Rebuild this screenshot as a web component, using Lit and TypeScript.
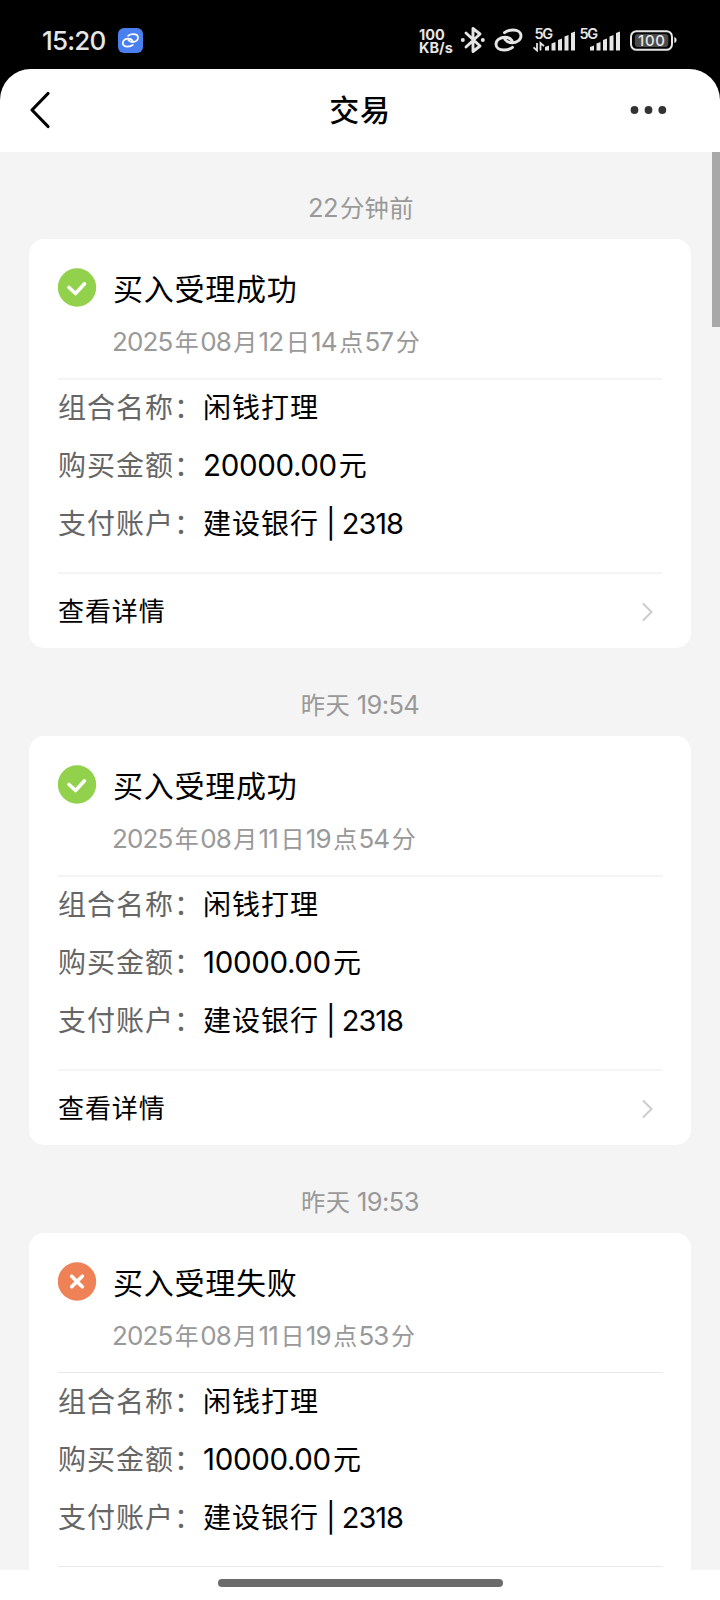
import { LitElement, html, svg, css, nothing } from "lit";
import { customElement, property } from "lit/decorators.js";

interface Trade {
  when: string;
  ok: boolean;
  title: string;
  time: string;
  amount: string;
}

const trades: Trade[] = [
  { when: "22分钟前", ok: true, title: "买入受理成功", time: "2025年08月12日14点57分", amount: "20000.00元" },
  { when: "昨天 19:54", ok: true, title: "买入受理成功", time: "2025年08月11日19点54分", amount: "10000.00元" },
  { when: "昨天 19:53", ok: false, title: "买入受理失败", time: "2025年08月11日19点53分", amount: "10000.00元" },
];

/* Latin runs get their own span so that they can use the numeral face. */
const mixed = (text: string) =>
  text
    .split(/([0-9:.| ]+)/)
    .filter(Boolean)
    .map((part) =>
      /^[0-9:.| ]+$/.test(part)
        ? html`<span class=${part.includes("|") ? "num acct" : "num"}>${part}</span>`
        : part
    );

const linkPaths = svg`
  <path d="M10 4.200C12.500 2.200 15.500 1.500 18.500 1.500C23.500 1.500 26.500 4 26.500 7.300C26.500 11.500 22 14.300 17.500 14.300C14.500 14.300 12 13 10.500 11"/>
  <path d="M18 18.800C15.500 20.800 12.500 21.500 9.500 21.500C4.500 21.500 1.500 19 1.500 15.700C1.500 11.500 6 8.700 10.500 8.700C13.500 8.700 16 10 17.500 12"/>`;

@customElement("status-bar")
export class StatusBar extends LitElement {
  static styles = css`
    :host {
      display: flex;
      align-items: center;
      height: 80px;
      box-sizing: border-box;
      padding: 0 42px 0 42px;
      background: #000;
      color: #e6e6e6;
      font-family: Inter, "Noto Sans", sans-serif;
    }
    .clock { font-size: 26px; font-weight: 500; letter-spacing: -0.800px; width: 76px; line-height: 30px; padding-top: 1px; white-space: nowrap; }
    .app { width: 25px; height: 25px; }
    .spacer { flex: 1; }
    .speed { font-size: 14.500px; line-height: 13px; font-weight: 700; width: 41px; padding-top: 1px; white-space: nowrap; }
    .rate { letter-spacing: 0; }
    .right { display: block; width: 218px; height: 30px; }
    .g { font: 600 14.500px Inter, sans-serif; fill: #e6e6e6; }
    .pct { font: 500 15px Inter, sans-serif; fill: #e6e6e6; }
  `;
  render() {
    const bars = (x: number) =>
      [5, 8.5, 12, 15.5, 19].map(
        (h, i) => svg`<path d="M${x + i * 6.5} 25.500v${-h + 1.500}l4-1.500v${h}z" fill="#e6e6e6"/>`
      );
    return html`
      <div class="clock">15:20</div>
      <svg class="app" viewBox="0 0 25 25">
        <rect width="25" height="25" rx="6" fill="#4a7ff0" />
        <g transform="translate(3.900 5.200) scale(.61 .62)" fill="none" stroke="#fff" stroke-width="2.800" stroke-linecap="round">${linkPaths}</g>
      </svg>
      <div class="spacer"></div>
      <div class="speed"><div>100</div><div class="rate">KB/s</div></div>
      <svg class="right" viewBox="0 0 218 30">
        <g fill="none" stroke="#e6e6e6" stroke-width="2.900" stroke-linejoin="round" stroke-linecap="round">
          <path d="M6 8l14 13-7 5.500V3.500l7 5.500L6 22" />
          <g transform="translate(34.500 3.500)">${linkPaths}</g>
        </g>
        <circle cx="2.800" cy="15" r="2" fill="#e6e6e6" />
        <circle cx="22.800" cy="15" r="2" fill="#e6e6e6" />
        <text class="g" x="74.500" y="13.500" textLength="18.500">5G</text>
        <path d="M77 18v7.500l-3.500-3.200M80.500 25.500V18l3.500 3.200" fill="none" stroke="#e6e6e6" stroke-width="1.800" />
        ${bars(85)}
        <text class="g" x="119.500" y="13.500" textLength="18.500">5G</text>
        ${bars(130)}
        <rect x="171" y="6.200" width="41" height="18.600" rx="5.500" fill="none" stroke="#e6e6e6" stroke-width="2" />
        <rect x="174.800" y="9" width="33.500" height="13" rx="3" fill="#4b4b4b" />
        <path d="M214.300 12c3 .5 3 5.500 0 6z" fill="#e6e6e6" />
        <text class="pct" x="178" y="20.700" textLength="27">100</text>
      </svg>
    `;
  }
}

@customElement("trade-card")
export class TradeCard extends LitElement {
  @property({ attribute: false }) trade!: Trade;
  @property({ type: Boolean }) partial = false;

  static styles = css`
    :host { display: block; }
    .when {
      height: 88px;
      box-sizing: border-box;
      padding: 38px 0 0 2px;
      line-height: 36px;
      text-align: center;
      font-size: 24.300px;
      letter-spacing: 0.400px;
      color: #999;
    }
    .card {
      box-sizing: border-box;
      height: 409px;
      margin: 0 29px;
      padding: 29px 28px 0 29px;
      background: #fff;
      border-radius: 15px;
    }
    .head { display: grid; grid-template-columns: 39px 1fr; grid-template-rows: 42px 36px; row-gap: 13px; column-gap: 16px; height: 110px; }
    .icon { width: 39px; height: 39px; }
    .title { font-size: 30px; letter-spacing: 0.750px; line-height: 38px; color: #000; }
    .time { grid-column: 2; font-size: 24px; line-height: 36px; letter-spacing: 0.100px; color: #999; white-space: nowrap; }
    .line { height: 2px; background: #f5f5f5; }
    .hair { height: 1px; margin-bottom: 1px; background: #e9e9e9; }
    .rows { height: 192px; }
    .row { display: flex; height: 58px; line-height: 53px; font-size: 28px; letter-spacing: 1px; white-space: pre; }
    .label { width: 145px; color: #666; }
    .value { color: #000; }
    .more { display: flex; justify-content: space-between; align-items: center; height: 73px; font-size: 26px; letter-spacing: 0.900px; line-height: 36px; color: #000; }
    .more span { margin-top: -2px; }
    .arrow { width: 12px; height: 20px; margin: 2px 10px 0 0; }
    .num { font-family: Inter, sans-serif; }
    .when .num { font-size: 25.500px; letter-spacing: -0.600px; margin-right: 2px; }
    .time .num { font-size: 26px; letter-spacing: -0.900px; margin: 0 2.500px 0 1.200px; }
    .time .num:first-child { margin-left: -1px; }
    .value .num { font-size: 29.500px; letter-spacing: -0.350px; margin-right: 2px; }
    .value .acct { font-size: 29px; letter-spacing: -1.050px; }
  `;
  render() {
    const t = this.trade;
    const line = this.partial ? "line hair" : "line";
    const rows = [
      ["组合名称：", "闲钱打理"],
      ["购买金额：", t.amount],
      ["支付账户：", "建设银行 | 2318"],
    ];
    return html`
      <div class="when">${mixed(t.when)}</div>
      <div class="card">
        <div class="head">
          <svg class="icon" viewBox="0 0 39 39">
            <circle cx="19" cy="19.500" r="19.200" fill=${t.ok ? "#92d14b" : "#ee8155"} />
            <path
              d=${t.ok ? "M11 19.500l6.500 6 9-9.700" : "M13.700 14.200l10.600 10.600M24.300 14.200l-10.600 10.600"}
              fill="none" stroke="#fff" stroke-width="3.600" stroke-linecap="round" stroke-linejoin="round" />
          </svg>
          <div class="title">${t.title}</div>
          <div class="time">${mixed(t.time)}</div>
        </div>
        <div class=${line}></div>
        <div class="rows">
          ${rows.map(([k, v]) => html`<div class="row"><div class="label">${k}</div><div class="value">${mixed(v)}</div></div>`)}
        </div>
        <div class=${line}></div>
        ${this.partial
          ? nothing
          : html`<div class="more">
              <span>查看详情</span>
              <svg class="arrow" viewBox="0 0 12 20"><path d="M2.500 2l8 8-8 8" fill="none" stroke="#ccc" stroke-width="2" stroke-linecap="round" /></svg>
            </div>`}
      </div>
    `;
  }
}

@customElement("app-root")
export class AppRoot extends LitElement {
  static styles = css`
    :host {
      display: flex;
      flex-direction: column;
      width: 720px;
      height: 1600px;
      overflow: hidden;
      background: #000;
      font-family: "Noto Sans CJK SC", sans-serif;
    }
    .sheet { margin-top: -11px; flex: 1; display: flex; flex-direction: column; background: #fff; border-radius: 31px 31px 0 0; overflow: hidden; }
    .nav { display: grid; grid-template-columns: 100px 1fr 100px; align-items: center; height: 83px; flex: none; }
    .back { width: 24px; height: 38px; margin: -2px 0 0 28px; }
    .dots { width: 38px; height: 10px; margin: -2px 0 0 9px; }
    .name { text-align: center; font-size: 30px; line-height: 44px; font-weight: 500; letter-spacing: 0.800px; color: #000; margin-top: -5px; }
    .list { position: relative; height: 1418px; flex: none; overflow: hidden; background: #f4f4f4; }
    .feed { margin-top: -1px; }
    .thumb { position: absolute; top: 0; right: 0; width: 8px; height: 175px; background: #a8a8a8; }
    .home { flex: 1; display: flex; justify-content: center; padding-top: 9px; }
    .pill { width: 285px; height: 8px; border-radius: 4px; background: #6b6b6b; }
  `;
  render() {
    return html`
      <status-bar></status-bar>
      <div class="sheet">
        <div class="nav">
          <svg class="back" viewBox="0 0 24 38"><path d="M20 2.500L4 19l16 16.500" fill="none" stroke="#000" stroke-width="3.200" stroke-linecap="round" stroke-linejoin="round" /></svg>
          <div class="name">交易</div>
          <svg class="dots" viewBox="0 0 38 10"><g fill="#333"><circle cx="5.500" cy="5" r="3.900" /><circle cx="19.500" cy="5" r="3.900" /><circle cx="33.300" cy="5" r="3.900" /></g></svg>
        </div>
        <div class="list">
          <div class="feed">
            ${trades.map((t, i) => html`<trade-card .trade=${t} ?partial=${i === trades.length - 1}></trade-card>`)}
          </div>
          <div class="thumb"></div>
        </div>
        <div class="home"><div class="pill"></div></div>
      </div>
    `;
  }
}
